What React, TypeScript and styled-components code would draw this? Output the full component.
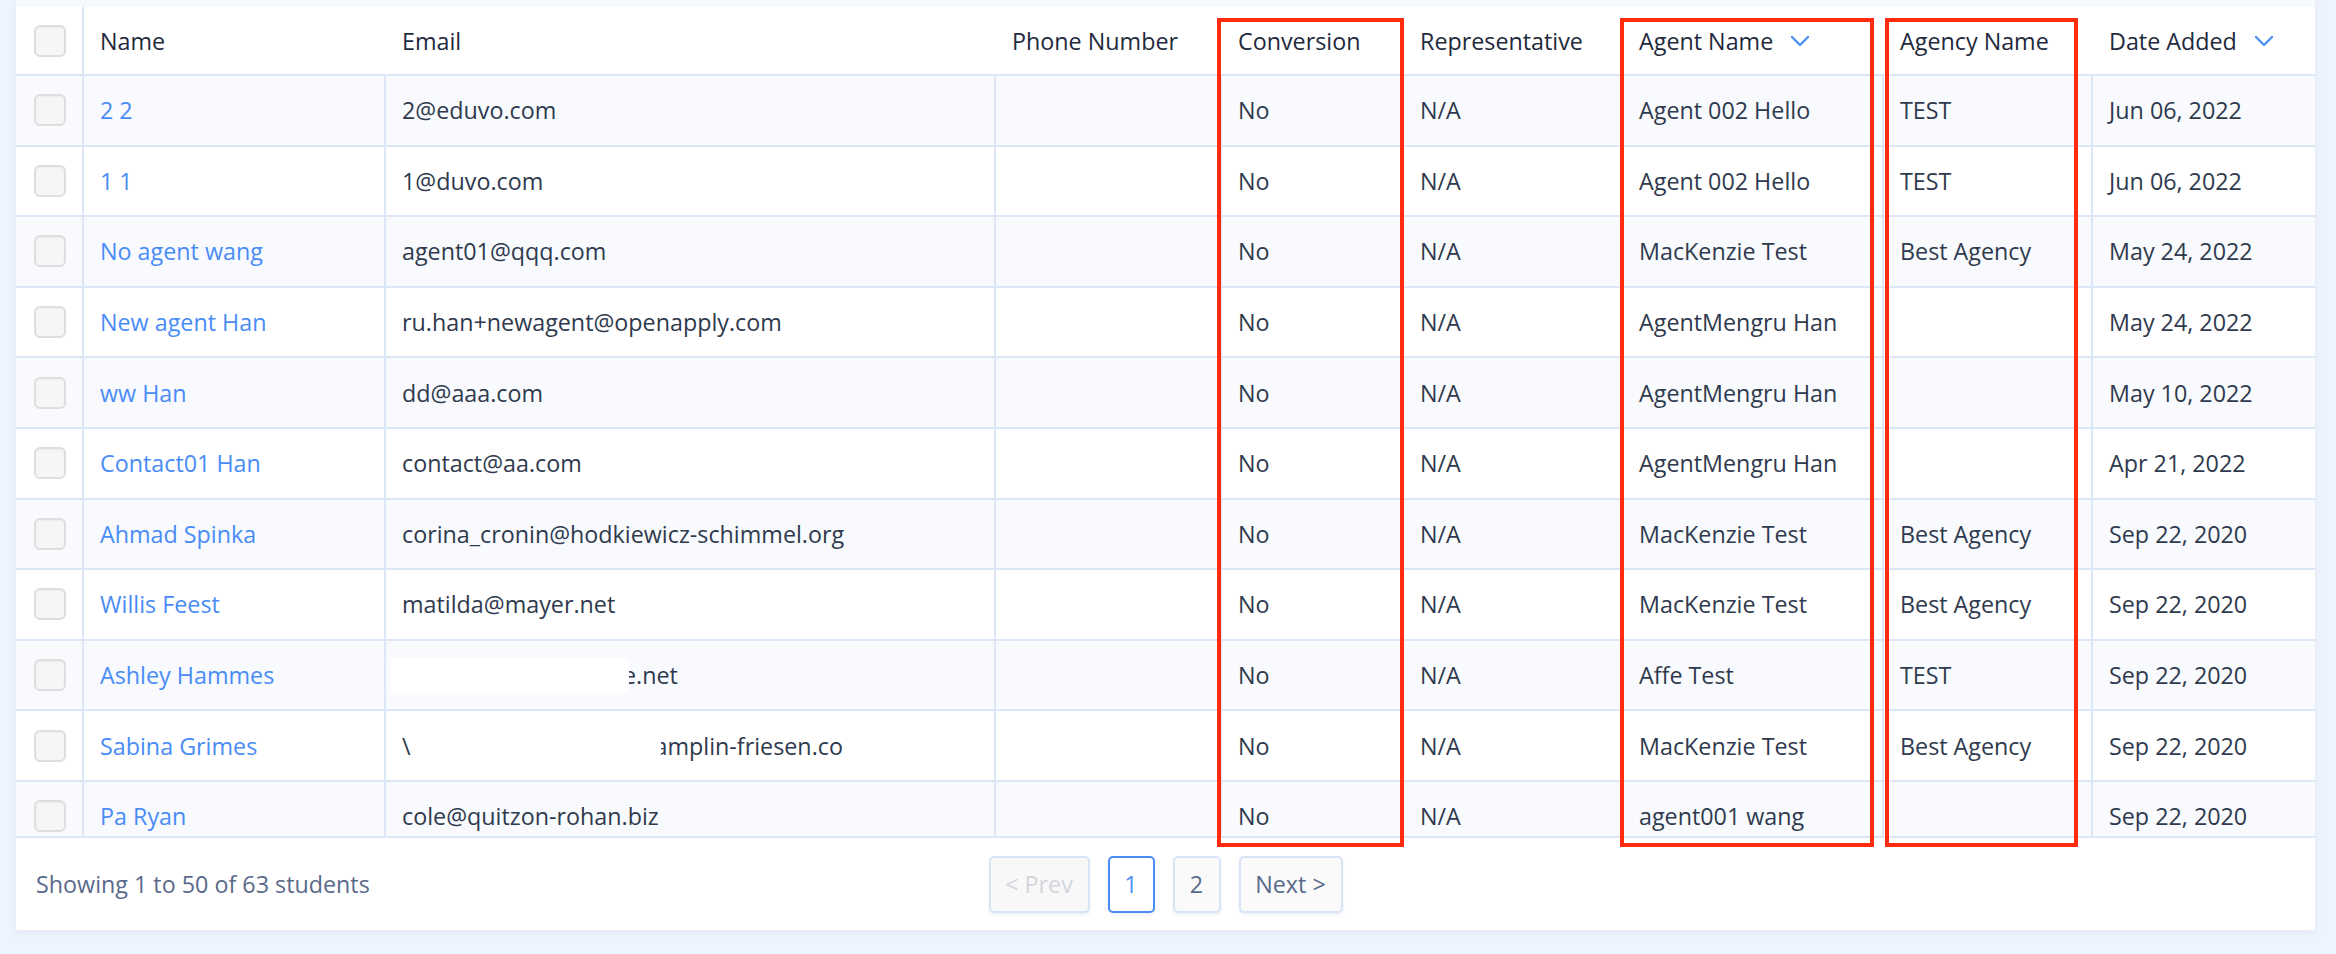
import React from 'react'
import styled, { createGlobalStyle } from 'styled-components'

const COLS = '66px 302px 610px 226px 182px 219px 261px 209px 224px'

type Row = {
  name: string
  email: React.ReactNode
  agent: string
  agency: string
  date: string
}

const GlobalStyle = createGlobalStyle`
  html, body {
    margin: 0;
    padding: 0;
    background: #eef4fd;
    font-family: "Open Sans", "Noto Sans", sans-serif;
  }
`

const Page = styled.div`
  min-height: 954px;
  box-sizing: border-box;
  padding: 0 21px 24px 16px;
  background: #eef4fd;
`

const Card = styled.div`
  position: relative;
  background: #fff;
  box-shadow: 0 2px 8px rgba(40, 70, 130, 0.07);
`

const TopBand = styled.div`
  height: 7px;
  background: #f6f9fe;
`

const ScrollArea = styled.div`
  height: 829px;
  overflow: hidden;
  border-bottom: 2px solid #dbe7f6;
`

const HeadRow = styled.div`
  display: grid;
  grid-template-columns: ${COLS};
  height: 69px;
  box-sizing: border-box;
  border-bottom: 2px solid #dbe7f6;
  background: #fff;
`

const BodyRow = styled.div<{ $alt: boolean }>`
  display: grid;
  grid-template-columns: ${COLS};
  height: 70.6px;
  box-sizing: border-box;
  border-bottom: 2px solid #dbe7f6;
  background: ${p => (p.$alt ? '#f8fafe' : '#fff')};
`

const HeadCell = styled.div<{ $line?: boolean }>`
  display: flex;
  align-items: center;
  box-sizing: border-box;
  padding-left: ${p => (p.$line ? '16px' : '18px')};
  border-left: ${p => (p.$line ? '2px solid #dbe7f6' : 'none')};
  font-size: 23.3px;
  color: #1f2a3d;
  white-space: nowrap;
`

const Cell = styled.div<{ $first?: boolean }>`
  display: flex;
  align-items: center;
  box-sizing: border-box;
  padding-left: 16px;
  border-left: ${p => (p.$first ? 'none' : '2px solid #dbe7f6')};
  font-size: 23.3px;
  color: #2f3a4e;
  white-space: nowrap;
  overflow: hidden;
`

const BoxCell = styled.div`
  display: flex;
  align-items: center;
  justify-content: center;
  padding-left: 2px;
`

const Check = styled.span`
  display: block;
  width: 32px;
  height: 32px;
  box-sizing: border-box;
  border: 2px solid #dedede;
  border-radius: 6px;
  background: #f6f6f6;
  box-shadow: inset 0 1px 2px rgba(0, 0, 0, 0.04);
`

const NameLink = styled.a`
  color: #4a8cf6;
  text-decoration: none;
`

const Redacted = styled.span<{ $w: number; $shift?: number }>`
  position: relative;
  z-index: 1;
  display: inline-block;
  width: ${p => p.$w}px;
  height: 35px;
  margin-left: ${p => p.$shift ?? 0}px;
  margin-right: -6px;
  background: #fff;
`

const Chevron = styled.svg`
  margin-left: 17px;
  width: 20px;
  height: 12px;
`

const Footer = styled.div`
  display: grid;
  grid-template-columns: 1fr auto 1fr;
  align-items: center;
  height: 92px;
`

const Summary = styled.div`
  padding-left: 20px;
  font-size: 23.3px;
  color: #5a6a8a;
`

const Pager = styled.div`
  display: flex;
  gap: 18px;
`

const PageBtn = styled.button<{ $active?: boolean; $w: number }>`
  width: ${p => p.$w}px;
  height: 57px;
  box-sizing: border-box;
  border: 2px solid ${p => (p.$active ? '#4a8cf6' : '#d8e5f6')};
  border-radius: 5px;
  background: ${p => (p.$active ? '#fff' : '#fafafa')};
  box-shadow: 0 2px 3px rgba(40, 70, 130, 0.08);
  font-family: inherit;
  font-size: 23.3px;
  color: ${p => (p.$active ? '#4a8cf6' : '#5a6a8a')};
  padding: 0;
  &:disabled {
    color: #d2d6dc;
    background: #f8f8f8;
  }
`

const Mark = styled.div<{ $x: number; $w: number }>`
  position: absolute;
  top: 18px;
  left: ${p => p.$x}px;
  width: ${p => p.$w}px;
  height: 829px;
  box-sizing: border-box;
  border: 4px solid #fe2b0e;
  pointer-events: none;
`

const Down = () => (
  <Chevron viewBox="0 0 20 12">
    <polyline points="2,2 10,10 18,2" fill="none" stroke="#4f8ff7" strokeWidth="2.4" strokeLinecap="round" strokeLinejoin="round" />
  </Chevron>
)

const rows: Row[] = [
  { name: '2 2', email: '2@eduvo.com', agent: 'Agent 002 Hello', agency: 'TEST', date: 'Jun 06, 2022' },
  { name: '1 1', email: '1@duvo.com', agent: 'Agent 002 Hello', agency: 'TEST', date: 'Jun 06, 2022' },
  { name: 'No agent wang', email: 'agent01@qqq.com', agent: 'MacKenzie Test', agency: 'Best Agency', date: 'May 24, 2022' },
  { name: 'New agent Han', email: 'ru.han+newagent@openapply.com', agent: 'AgentMengru Han', agency: '', date: 'May 24, 2022' },
  { name: 'ww Han', email: 'dd@aaa.com', agent: 'AgentMengru Han', agency: '', date: 'May 10, 2022' },
  { name: 'Contact01 Han', email: 'contact@aa.com', agent: 'AgentMengru Han', agency: '', date: 'Apr 21, 2022' },
  { name: 'Ahmad Spinka', email: 'corina_cronin@hodkiewicz-schimmel.org', agent: 'MacKenzie Test', agency: 'Best Agency', date: 'Sep 22, 2020' },
  { name: 'Willis Feest', email: 'matilda@mayer.net', agent: 'MacKenzie Test', agency: 'Best Agency', date: 'Sep 22, 2020' },
  {
    name: 'Ashley Hammes',
    email: (<><Redacted $w={238} $shift={-11} />e.net</>),
    agent: 'Affe Test', agency: 'TEST', date: 'Sep 22, 2020',
  },
  {
    name: 'Sabina Grimes',
    email: (<>\<Redacted $w={250} />amplin-friesen.co</>),
    agent: 'MacKenzie Test', agency: 'Best Agency', date: 'Sep 22, 2020',
  },
  { name: 'Pa Ryan', email: 'cole@quitzon-rohan.biz', agent: 'agent001 wang', agency: '', date: 'Sep 22, 2020' },
]

const App = () => {
  return (
    <>
      <GlobalStyle />
      <Page>
        <Card>
          <TopBand />
          <ScrollArea>
            <HeadRow>
              <BoxCell><Check /></BoxCell>
              <HeadCell $line>Name</HeadCell>
              <HeadCell>Email</HeadCell>
              <HeadCell>Phone Number</HeadCell>
              <HeadCell>Conversion</HeadCell>
              <HeadCell>Representative</HeadCell>
              <HeadCell>Agent Name<Down /></HeadCell>
              <HeadCell>Agency Name</HeadCell>
              <HeadCell>Date Added<Down /></HeadCell>
            </HeadRow>
            {rows.map((r, i) => (
              <BodyRow key={i} $alt={i % 2 === 0}>
                <BoxCell><Check /></BoxCell>
                <Cell><NameLink href="#">{r.name}</NameLink></Cell>
                <Cell>{r.email}</Cell>
                <Cell />
                <Cell>No</Cell>
                <Cell>N/A</Cell>
                <Cell>{r.agent}</Cell>
                <Cell>{r.agency}</Cell>
                <Cell>{r.date}</Cell>
              </BodyRow>
            ))}
          </ScrollArea>
          <Footer>
            <Summary>Showing 1 to 50 of 63 students</Summary>
            <Pager>
              <PageBtn $w={101} disabled>&lt; Prev</PageBtn>
              <PageBtn $w={47} $active>1</PageBtn>
              <PageBtn $w={48}>2</PageBtn>
              <PageBtn $w={104}>Next &gt;</PageBtn>
            </Pager>
            <div />
          </Footer>
          <Mark $x={1201} $w={187} />
          <Mark $x={1604} $w={254} />
          <Mark $x={1869} $w={193} />
        </Card>
      </Page>
    </>
  )
}

export default App
